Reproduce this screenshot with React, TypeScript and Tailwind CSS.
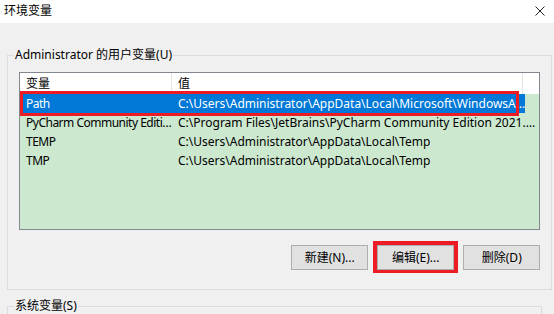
import type { ReactNode } from 'react'

const font = { fontFamily: '"Noto Sans", "Noto Sans CJK SC", sans-serif' }

type Row = { name: string; value: string }

const rows: Row[] = [
  { name: 'Path', value: 'C:\\Users\\Administrator\\AppData\\Local\\Microsoft\\WindowsA…' },
  { name: 'PyCharm Community Editi…', value: 'C:\\Program Files\\JetBrains\\PyCharm Community Edition 2021.…' },
  { name: 'TEMP', value: 'C:\\Users\\Administrator\\AppData\\Local\\Temp' },
  { name: 'TMP', value: 'C:\\Users\\Administrator\\AppData\\Local\\Temp' },
]

function Button({ children, marked }: { children: ReactNode; marked?: boolean }) {
  return (
    <div className={marked ? 'border-[4px] border-b-[3px] border-[#ed1c24]' : 'border-[4px] border-b-[3px] border-transparent'}>
      <button
        type="button"
        className="flex h-[25px] w-[77px] items-center justify-center border border-[#adadad] bg-[#e1e1e1] text-[12px] text-black"
      >
        {children}
      </button>
    </div>
  )
}

export default function App() {
  return (
    <div style={font} className="flex h-[314px] w-[554px] flex-col overflow-hidden bg-[#f0f0f0] text-[12px] text-black">
      {/* Title bar */}
      <div className="flex h-[23px] shrink-0 items-center justify-between bg-white pb-[2px] pl-[4px] pr-[9px]">
        <span className="leading-[16px]">环境变量</span>
        <svg width="10" height="10" viewBox="0 0 10 10">
          <path d="M0.5 0.5 L9.5 9.5 M9.5 0.5 L0.5 9.5" stroke="#222" strokeWidth="1" />
        </svg>
      </div>

      {/* User variables group */}
      <fieldset className="mx-[7px] mt-[24px] w-[535px] shrink-0 border border-[#dcdcdc] px-[11px] pb-[16px]">
        <legend className="ml-[-5px] px-[1px] leading-[16px]">Administrator 的用户变量(U)</legend>
        <div className="mt-[9px] h-[158px] border border-[#828790] bg-[#cce8cf]">
          <div className="flex h-[21px] items-center bg-white">
            <div className="flex h-full w-[152px] items-center border-r border-[#e5e5e5] pl-[6px]">变量</div>
            <div className="flex h-full w-[351px] items-center border-r border-[#e5e5e5] pl-[6px]">值</div>
          </div>
          {rows.map((r, i) => (
            <div
              key={r.name}
              className={
                i === 0
                  ? 'relative mr-[14px] flex h-[19px] items-center bg-[#0078d7] text-white'
                  : 'flex h-[19px] items-center'
              }
            >
              <div className="w-[152px] shrink-0 overflow-hidden whitespace-nowrap pl-[6px] tracking-[-0.5px]">{r.name}</div>
              <div className="overflow-hidden whitespace-nowrap pl-[6px]">{r.value}</div>
              {i === 0 && (
                <div className="absolute left-0 top-[-3px] bottom-[-3px] w-[499px] border-[3px] border-[#ed1c24]" />
              )}
            </div>
          ))}
        </div>
        <div className="mr-[-4px] mt-[11px] flex justify-end gap-[1px]">
          <Button>新建(N)...</Button>
          <Button marked>编辑(E)...</Button>
          <Button>删除(D)</Button>
        </div>
      </fieldset>

      {/* System variables group */}
      <fieldset className="mx-[7px] mt-[8px] h-[60px] w-[535px] shrink-0 border border-[#dcdcdc] px-[11px]">
        <legend className="ml-[-5px] px-[1px] leading-[16px]">系统变量(S)</legend>
      </fieldset>
    </div>
  )
}
